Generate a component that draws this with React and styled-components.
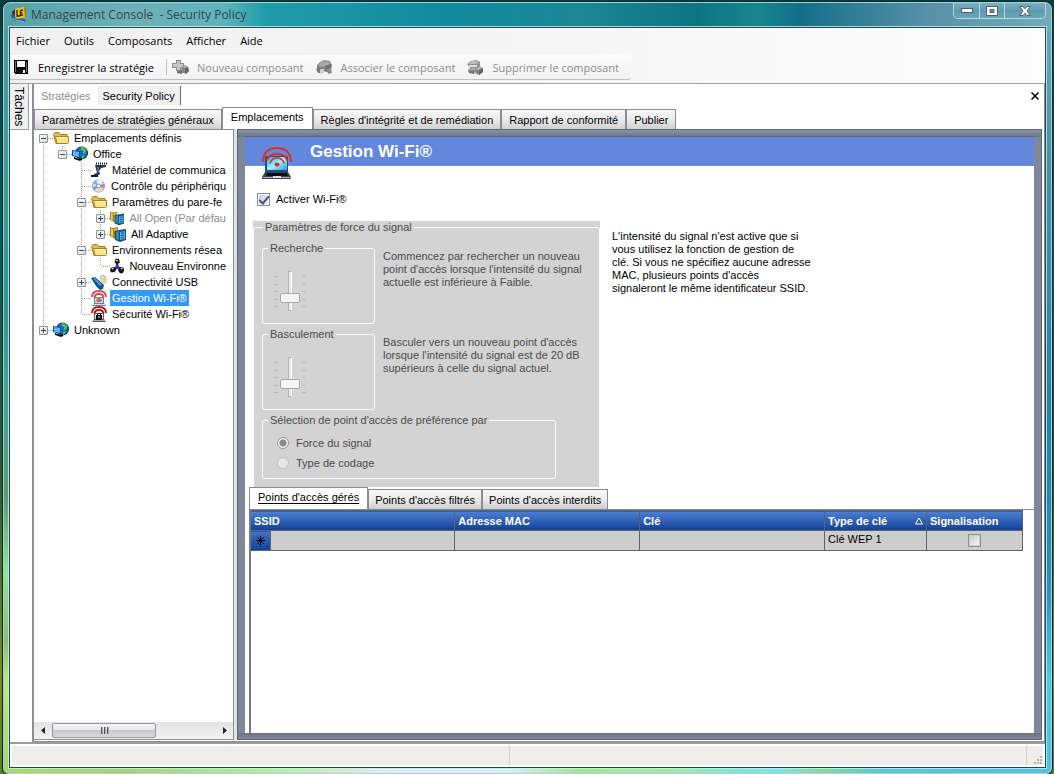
import { useState } from "react";
import styled, { createGlobalStyle, css } from "styled-components";

const GlobalStyle = createGlobalStyle`
  * {
    box-sizing: border-box;
  }
  body {
    margin: 0;
    font-family: "Liberation Sans", Arial, sans-serif;
    font-size: 11px;
    color: #000;
  }
  button,
  input {
    font: inherit;
    color: inherit;
    margin: 0;
  }
  button {
    padding: 0;
    border: none;
    background: none;
    white-space: nowrap;
  }
`;

/* window frame */

const Desktop = styled.div`
  min-height: 100vh;
  display: flex;
  padding: 2px 2px 0 3px;
  background: linear-gradient(180deg, #033f42 0%, #0b5a58 30%, #2e5a34 62%, #7d8a2a 88%, #5f7a28 100%);
`;

const Frame = styled.div`
  flex: 1;
  min-width: 0;
  display: flex;
  flex-direction: column;
  padding: 0 5px 5px 5px;
  border: 1px solid #9fd6d8;
  border-radius: 7px 7px 6px 6px;
  box-shadow: 0 0 0 1px #04282b;
  background:
    linear-gradient(90deg, #55a3a6 0, #6fb0b6 12%, #5eb4bc 21%, #1f9cab 25%, #0f8b9f 42%, #1c8797 55%, #0d7482 66%, #17868f 72%, #126f88 76%, #5790a8 88%, #74abbb 100%) top / 100% 26px no-repeat,
    linear-gradient(90deg, #abd868 0, #a9d373 12%, #b2f19b 26%, #d9e8d0 32%, #deedfc 38%, #dcecf8 48%, #a2e68c 55%, #a8e89a 63%, #7ce6da 70%, #7fe4e4 74%, #8ad99a 78%, #58c6d8 84%, #54bfe4 100%) bottom / 100% 6px no-repeat,
    linear-gradient(180deg, #4a9fa2 0, #2d9794 40%, #3fa795 50%, #5d9a6f 64%, #92e591 74%, #8cbd68 83%, #c0e877 88%, #a5d468 100%) left / 50% 100% no-repeat,
    linear-gradient(180deg, #74abbb 0, #4b8fa8 20%, #2383a8 55%, #2a8fc4 76%, #45cdf2 88%, #4fbde8 100%) right / 50% 100% no-repeat;
`;

const TitleBar = styled.header`
  height: 24px;
  display: flex;
  align-items: flex-start;
`;

const AppTitle = styled.h1`
  flex: 1;
  display: flex;
  align-items: center;
  gap: 4px;
  height: 23px;
  margin: 0;
  padding-left: 2px;
  font: 400 12px "Open Sans", sans-serif;
  color: #33474d;
  white-space: pre;
`;

const Caption = styled.div`
  display: flex;
  border: 1px solid #b4dbe2;
  border-top: none;
  border-radius: 0 0 5px 5px;
  overflow: hidden;
`;

const CaptionButton = styled.button`
  width: ${(p) => (p.$wide ? 41 : 25)}px;
  height: 15px;
  display: flex;
  align-items: center;
  justify-content: center;
  background: linear-gradient(180deg, #7fb0c0, #5e9bb0 50%, #6ba5b5);
  & + & {
    border-left: 1px solid #b4dbe2;
  }
`;

const Client = styled.div`
  flex: 1;
  min-height: 0;
  display: flex;
  flex-direction: column;
  border: 1px solid #1f4b50;
  box-shadow: 0 0 0 1px rgba(200, 240, 240, 0.8);
  background: #fff;
`;

/* menu and toolbar */

const Bars = styled.div`
  background: linear-gradient(90deg, #f0f0f0, #fcfcfc);
  border-bottom: 1px solid #a0a0a0;
  font-family: "Open Sans", sans-serif;
`;

const MenuBar = styled.nav`
  display: flex;
  gap: 14px;
  height: 27px;
  padding: 0 6px;
`;

const MenuItem = styled.button`
  height: 24px;
`;

const Toolbar = styled.div`
  display: inline-flex;
  align-items: center;
  gap: 12px;
  height: 25px;
  margin-bottom: 3px;
  padding: 0 12px 0 4px;
  background: linear-gradient(180deg, #fbfbfb, #f2f2f2);
  border-bottom: 1px solid #c0c0c0;
  border-radius: 0 0 3px 0;
  vertical-align: top;
`;

const ToolButton = styled.button`
  display: flex;
  align-items: center;
  gap: ${(p) => (p.disabled ? 8 : 10)}px;
  &:disabled {
    color: #8d8d8d;
  }
`;

const ToolSeparator = styled.span`
  width: 1px;
  height: 16px;
  margin-right: -7px;
  background: #bdbdbd;
`;

/* main area */

const Main = styled.div`
  flex: 1;
  min-height: 0;
  display: flex;
`;

const TaskStrip = styled.aside`
  width: 22px;
  flex: none;
`;

const TaskTab = styled.button`
  width: 19px;
  height: 46px;
  writing-mode: vertical-rl;
  font-size: 12px;
  border: 1px solid #a0a0a0;
  border-left: none;
  border-top: none;
  background: #f0f0f0;
`;

const Documents = styled.section`
  flex: 1;
  min-width: 0;
  display: flex;
  flex-direction: column;
  border: solid #8b8d99;
  border-width: 0 1px 1px 2px;
  padding: 0 2px 1px 0;
`;

const DocBar = styled.div`
  display: flex;
  align-items: center;
  height: 23px;
  padding: 0 2px 0 0;
`;

const DocTab = styled.button`
  height: 19px;
  padding: 0 7px;
  color: ${(p) => (p.$active ? "#000" : "#8d8d8d")};
  ${(p) =>
    p.$active &&
    css`
      padding: 0 5px;
      background: #f0f0f0;
      border-right: 1px solid #6a6a70;
    `}
`;

const CloseDoc = styled.button`
  margin-left: auto;
  width: 10px;
  height: 10px;
  display: flex;
  align-items: center;
  justify-content: center;
`;

const TabList = styled.div`
  display: flex;
  align-items: flex-end;
  height: 22px;
`;

const Tab = styled.button`
  height: 20px;
  padding: 1px ${(p) => (p.$compact ? 6 : 7)}px 0;
  border: 1px solid #8b8b95;
  border-bottom: none;
  background: linear-gradient(180deg, #f8f8f8, #ebebeb 50%, #cfcfcf);
  ${(p) =>
    p.$active &&
    css`
      height: 22px;
      padding: 0 8px 3px;
      background: #fff;
    `}
  text-decoration: ${(p) => (p.$compact && p.$active ? "underline" : "none")};
  text-underline-offset: 2px;
`;

const Workspace = styled.div`
  flex: 1;
  min-height: 0;
  display: flex;
  gap: 3px;
  background: #e3e3e3;
`;

/* tree */

const TreePanel = styled.div`
  width: 200px;
  flex: none;
  display: flex;
  flex-direction: column;
  background: #fff;
  border: 1px solid #8b8d99;
  border-left: none;
`;

const Tree = styled.ul`
  flex: 1;
  margin: 0;
  padding: 0 5px 0 0;
  list-style: none;
  overflow: hidden;
`;

const TreeRow = styled.li`
  display: flex;
  align-items: center;
  height: 16px;
`;

const dots = "#a4a4a4 0 1px, transparent 1px 2px";

const Guide = styled.span`
  width: 19px;
  height: 16px;
  flex: none;
  display: flex;
  align-items: center;
  justify-content: center;
  background-repeat: no-repeat;
  background-image:
    ${(p) => (p.$up ? `repeating-linear-gradient(180deg, ${dots})` : "none")},
    ${(p) => (p.$down ? `repeating-linear-gradient(180deg, ${dots})` : "none")},
    ${(p) => (p.$right ? `repeating-linear-gradient(90deg, ${dots})` : "none")};
  background-size: 1px 8px, 1px 8px, 9px 1px;
  background-position: 9px 0, 9px 8px, 10px 8px;
`;

const Expander = styled.button`
  width: 9px;
  height: 9px;
  display: flex;
  background: linear-gradient(135deg, #fff, #dcdcdc);
  border: 1px solid #919191;
  border-radius: 1px;
`;

const TreeLabel = styled.span`
  height: 16px;
  line-height: 16px;
  margin-left: 3px;
  padding: 0 2px;
  white-space: nowrap;
  color: ${(p) => (p.$muted ? "#8d8d8d" : "#000")};
  ${(p) =>
    p.$selected &&
    css`
      background: #3399ff;
      color: #fff;
    `}
`;

const ScrollBar = styled.div`
  display: flex;
  height: 17px;
  background: linear-gradient(180deg, #e4e4e4, #f2f2f2);
`;

const ScrollArrow = styled.button`
  width: 17px;
  display: flex;
  align-items: center;
  justify-content: center;
`;

const ScrollTrack = styled.div`
  flex: 1;
  display: flex;
  padding: 1px;
`;

const ScrollThumb = styled.div`
  width: 64%;
  display: flex;
  align-items: center;
  justify-content: center;
  gap: 2px;
  border: 1px solid #979797;
  border-radius: 2px;
  background: linear-gradient(180deg, #f4f4f4 0, #e6e6e8 48%, #c9cacd 50%, #d8d9dc 100%);
`;

const Grip = styled.span`
  width: 1px;
  height: 7px;
  background: #555;
  box-shadow: 1px 0 #aaa;
`;

/* page */

const PageFrame = styled.div`
  flex: 1;
  min-width: 0;
  display: flex;
  border: 1px solid #62656f;
  padding: 6px 7px 6px 7px;
  background:
    linear-gradient(180deg, #8a93a6, #6c7285) top / 100% 7px no-repeat,
    linear-gradient(180deg, #6c7285, #8088a0) bottom / 100% 6px no-repeat,
    #7f879b;
`;

const Page = styled.main`
  flex: 1;
  min-width: 0;
  display: flex;
  flex-direction: column;
  background: #fff;
  border-top: 1px solid #62656f;
`;

const PageHeader = styled.div`
  display: flex;
  height: 29px;
  padding-left: 16px;
  gap: 17px;
  background: #6487de;
  border-bottom: 1px solid #7090d8;
`;

const PageIcon = styled.svg`
  flex: none;
  width: 32px;
  height: 36px;
  margin-top: 8px;
`;

const PageTitle = styled.h2`
  margin: 0;
  font-size: 17px;
  line-height: 30px;
  color: #fff;
`;

const CheckLabel = styled.label`
  display: flex;
  align-items: center;
  align-self: flex-start;
  gap: 6px;
  height: 16px;
  margin: 25px 0 14px 12px;
`;

const CheckBox = styled.input.attrs({ type: "checkbox" })`
  appearance: none;
  display: inline-grid;
  place-content: center;
  width: 13px;
  height: 13px;
  border: 1px solid #8e8f8f;
  background: linear-gradient(135deg, #c9cdd4, #f6f6f6) content-box #f4f4f4;
  padding: 1px;
  &:checked::before {
    content: "";
    width: 4px;
    height: 8px;
    border: solid #3d5191;
    border-width: 0 2px 2px 0;
    transform: rotate(40deg);
  }
`;

const Columns = styled.div`
  display: flex;
  align-items: flex-start;
  padding-left: 8px;
  gap: 12px;
`;

const SignalBox = styled.div`
  width: 347px;
  height: 266px;
  overflow: hidden;
  background: #d3d3d3;
  color: #4c4c4c;
`;

const Group = styled.fieldset`
  min-width: 0;
  margin: 0;
  padding: 0 8px;
  border: 1px solid #fcfdfe;
  border-radius: 3px;
`;

const Legend = styled.legend`
  padding: 0 2px;
  margin-left: ${(p) => (p.$outer ? 1 : -6)}px;
  line-height: 13px;
`;

const OuterGroup = styled(Group)`
  height: 280px;
  display: flex;
  flex-direction: column;
  padding-top: 8px;
`;

const Setting = styled.div`
  display: flex;
  gap: 8px;
  height: 86px;
`;

const SliderGroup = styled(Group)`
  width: 113px;
  height: 82px;
  padding: 16px 11px 0;
`;

const Hint = styled.p`
  width: 204px;
  margin: 0;
  padding-top: 8px;
  line-height: 13px;
`;

const Note = styled.p`
  width: 200px;
  margin: 0;
  padding-top: 9px;
  line-height: 13px;
`;

const SliderRow = styled.div`
  display: flex;
  height: 40px;
`;

const Ticks = styled.div`
  width: 4px;
  display: flex;
  flex-direction: column;
  justify-content: space-between;
  padding: 5px 0 4px;
  & > i {
    height: 1px;
    background: #bcbcbc;
  }
`;

const Slider = styled.input.attrs({ type: "range", min: 0, max: 4 })`
  appearance: none;
  writing-mode: vertical-lr;
  direction: rtl;
  width: 24px;
  height: 40px;
  background: none;
  &::-webkit-slider-runnable-track {
    width: 4px;
    background: #e9ebeb;
    border: 1px solid #b4b4b4;
    border-right-color: #fff;
  }
  &::-webkit-slider-thumb {
    appearance: none;
    width: 20px;
    height: 10px;
    margin-left: -9px;
    background: #f5f5f5;
    border: 1px solid #a6a8aa;
    border-radius: 2px;
  }
`;

const RadioGroup = styled(Group)`
  width: 294px;
  height: 65px;
  display: flex;
  flex-direction: column;
  gap: 4px;
  padding: 8px 11px 0;
`;

const RadioLabel = styled.label`
  display: flex;
  align-items: center;
  gap: 7px;
  height: 16px;
  padding-left: 3px;
`;

const Radio = styled.input.attrs({ type: "radio" })`
  appearance: none;
  width: 12px;
  height: 12px;
  border: 1px solid #c2c2c2;
  border-radius: 50%;
  background: #e6e6e6;
  &:checked {
    border-color: #989898;
    background: radial-gradient(circle, #8a8a8a 0 3px, #eeeeee 4px);
  }
`;

const AccessPoints = styled.section`
  flex: 1;
  display: flex;
  flex-direction: column;
  margin-left: 4px;
`;

const TablePane = styled.div`
  flex: 1;
  padding-right: 11px;
  border-top: 1px solid #85888f;
  border-left: 2px solid #74777f;
`;

const Grid = styled.table`
  width: 100%;
  table-layout: fixed;
  border-collapse: collapse;
`;

const Th = styled.th`
  height: 20px;
  padding: 0 3px;
  border: 1px solid #5f6268;
  border-left-width: ${(p) => (p.$first ? 0 : 1)}px;
  text-align: left;
  line-height: 14px;
  white-space: nowrap;
  color: #fff;
  background: linear-gradient(180deg, #4c80d2, #123f98);
`;

const ThInner = styled.span`
  display: flex;
  align-items: center;
  justify-content: space-between;
`;

const Td = styled.td`
  height: 20px;
  padding: 0 3px;
  border: 1px solid #5f6268;
  background: #cdcdcd;
  line-height: 16px;
  vertical-align: top;
  text-align: ${(p) => (p.$center ? "center" : "left")};
  & > input {
    margin-top: 3px;
    vertical-align: top;
  }
`;

const MarkerCell = styled(Td)`
  padding: 0;
  border-left: none;
  vertical-align: middle;
  background: linear-gradient(180deg, #4273c8, #123f98);
`;

const StatusBar = styled.footer`
  display: flex;
  height: 25px;
  padding: 2px;
  border-top: 2px solid #9b9b9b;
  background: #fff;
`;

const StatusCell = styled.div`
  flex: ${(p) => p.$grow};
  display: flex;
  align-items: flex-end;
  justify-content: flex-end;
  background: #f0edec;
  & + & {
    border-left: 1px solid #cfcccb;
  }
`;

/* icons */

const AppLogo = () => (
  <svg width="16" height="16" viewBox="0 0 16 16">
    <path d="M1 5l3-3v9l-2 1z" fill="#26324f" />
    <path d="M0 8q1 6 7 6l6 1 2-2-2-1-7-1q-3-1-3-4z" fill="#2c57b4" />
    <path d="M2 11q3 3 8 3l3 1" fill="none" stroke="#8fb2ee" />
    <path d="M4 2l9-2 2 10-9 2q-2-1-2-3z" fill="#f0c313" />
    <path d="M13 0l2 1v9l-1 1z" fill="#a97f0a" />
    <path d="M6 3v6h3M12 3L9.500 3.500v5L12 8M9.500 6h2" fill="none" stroke="#2b2710" strokeWidth="1.300" />
  </svg>
);

const SaveIcon = () => (
  <svg width="14" height="14" viewBox="0 0 14 14" shapeRendering="crispEdges">
    <path d="M0 0h14v14H1l-1-1z" fill="#000" />
    <path d="M1 1h1v11H1zM12 2h1v10h-1z" fill="#77773a" />
    <path d="M3 1h8v6H3z" fill="#fff" />
    <path d="M3 9h8v4H3z" fill="#111" />
    <path d="M9 10h2v3H9z" fill="#fff" />
  </svg>
);

const BlocksIcon = ({ kind }) => (
  <svg width="17" height="15" viewBox="0 0 17 15">
    {kind === "new" && (
      <>
        <path d="M5 9l3-2 4 2v3l-3 2-4-1z" fill="#757575" />
        <path d="M5 9l3-2 4 2-3 1z" fill="#a6a6a6" />
        <path d="M10 7l3-2 3 2 1 4-3 3-4-2z" fill="#868686" />
        <path d="M10 7l3-2 3 2-3 1z" fill="#b5b5b5" />
        <path d="M13 8l3-1 1 4-3 3z" fill="#666" />
        <path d="M4 0h5v3h3v5H9v3H4V8H0V3h4z" fill="#8d8d8d" />
        <path d="M5 1h3v3h3v3H8v3H5V7H1V4h4z" fill="#c6c6c6" />
      </>
    )}
    {kind === "link" && (
      <>
        <path d="M1 5l3-3 4-2 6 1 2 4-1 5-4 2-10-2z" fill="#858585" />
        <path d="M2 5l3-3 4-1 5 1 1 2-6 2-4 1z" fill="#a6a6a6" />
        <path d="M9 6l6-2v5l-4 3z" fill="#707070" />
        <path d="M0 9l3-2 3 2v4H2z" fill="#7a7a7a" />
        <path d="M4 9h4v4l-4 1z" fill="#d0d0d0" />
        <path d="M11 9l4-1 1 5-4 1z" fill="#8f8f8f" />
      </>
    )}
    {kind === "delete" && (
      <>
        <path d="M1 10l3-2 4 2-1 4-5-1z" fill="#707070" />
        <path d="M1 10l3-2 4 2-3 1z" fill="#a3a3a3" />
        <path d="M8 9l4-3 4 2v4l-4 3-4-2z" fill="#858585" />
        <path d="M8 9l4-3 4 2-4 2z" fill="#b5b5b5" />
        <path d="M12 10l4-2v4l-4 3z" fill="#666" />
        <path d="M0 4l4-3 5-1 4 2v4L9 9 3 8z" fill="#8f8f8f" />
        <path d="M1 4l4-3 4 0 3 2-4 1z" fill="#bcbcbc" />
        <path d="M2 5h8v2H2z" fill="#dedede" />
      </>
    )}
  </svg>
);

const FolderIcon = () => (
  <svg width="16" height="16" viewBox="0 0 16 16">
    <path d="M.5 4.500l1.500-2h4l1.500 2h6.500v9H3z" fill="#e3bd45" stroke="#a67b15" />
    <path d="M2.500 6.500h13v6l-1 1H4z" fill="#fbe48d" stroke="#ad821d" />
    <path d="M3.500 7.500h11" stroke="#fff8d0" />
  </svg>
);

const GlobeIcon = () => (
  <svg width="16" height="16" viewBox="0 0 16 16">
    <circle cx="9.500" cy="7" r="6.500" fill="#0b2447" />
    <circle cx="9.500" cy="6.500" r="5.500" fill="#1c63cf" />
    <path d="M9 1c3 0 5 2 5.500 4l-2 3-2-1 1-2-3-1zM10 10l3-1-1 3-2 1z" fill="#47c552" />
    <path d="M0 4l8 1v7l-8-2z" fill="#174b9d" />
    <path d="M1 5l6 1v5L1 9.500z" fill="#5bbaf5" />
    <path d="M2 11l6 2 2-1v2l-2 1-6-2z" fill="#111" />
  </svg>
);

const HardwareIcon = () => (
  <svg width="16" height="16" viewBox="0 0 16 16">
    <path d="M4 3l11 0v2l-5 1-2 3 1 3-3 2H2l1-2 3-1-1-4z" fill="#293552" />
    <path d="M5 1.500h11" stroke="#111" strokeWidth="2" strokeDasharray="1 1" />
    <path d="M0 13h7v2H0z" fill="#161c2c" />
    <path d="M7 5v5" stroke="#8a97b8" />
  </svg>
);

const DiscIcon = () => (
  <svg width="16" height="16" viewBox="0 0 16 16">
    <circle cx="8" cy="8" r="6.500" fill="#d9dfec" stroke="#a7a3b8" />
    <path d="M8 8L2 5l3-3z" fill="#58b9ee" />
    <path d="M8 8V1l4 1z" fill="#fff" />
    <path d="M8 8l6-3v6z" fill="#c17fe6" />
    <path d="M8 8l4 5-4 2z" fill="#efe26b" />
    <path d="M8 8l-5 5-1-4z" fill="#7a8fe4" />
    <circle cx="8" cy="8" r="2" fill="#fff" stroke="#889" />
  </svg>
);

const FirewallIcon = () => (
  <svg width="16" height="16" viewBox="0 0 16 16">
    <path d="M0 1l3 1 5-1v3l-3 1v8l-5-3z" fill="#b07c0c" />
    <path d="M1 2l2 1v8l-2-1zM4 3l3-1v1L4 5z" fill="#f3cd4f" />
    <path d="M5 5l4-1 7-1v11l-6 2-5-2z" fill="#12507e" />
    <path d="M6 6l3-1v9l-3-1z" fill="#2f86bf" />
    <path d="M10 6l5-1v8l-5 1z" fill="#4faee2" />
    <path d="M11 7h3M11 9.500h3M11 12h3" stroke="#12507e" />
  </svg>
);

const NetworkIcon = () => (
  <svg width="16" height="16" viewBox="0 0 16 16">
    <path d="M8 4v5M8 9l-4 3M8 9l4 3" stroke="#1d35d8" strokeWidth="3" />
    <path d="M6 0h4l1 4-3 2-3-2z" fill="#111" />
    <path d="M1 10l4-1 2 3-2 3H1l-1-2z" fill="#111" />
    <path d="M11 9l4 1 1 3-2 3h-3l-2-3z" fill="#111" />
    <path d="M6 1h3v2H7zM2 10h2v2H2zM12 10h2v2h-2z" fill="#f0b070" />
  </svg>
);

const UsbIcon = () => (
  <svg width="16" height="16" viewBox="0 0 16 16">
    <path d="M0 4l4-1 9 8-1 4-3 1-4-4z" fill="#14518f" />
    <path d="M2 4l2 0 7 7-2 1z" fill="#49a3de" />
    <path d="M10 5V3q2-3 4 0v2" fill="none" stroke="#b9b9a5" strokeWidth="1.500" />
    <path d="M9 4h7v5l-3 1-4-3z" fill="#e6d3a0" />
  </svg>
);

const WifiIcon = ({ locked }) => (
  <svg width="16" height="16" viewBox="0 0 16 16">
    <path d="M3 7h10v6l2 3H1l2-3z" fill={locked ? "#555b60" : "#5d86a0"} />
    <path d="M4 8h8v5H4z" fill={locked ? "#e3e3e3" : "#a8e0f5"} />
    <path d="M2 14.500h12" stroke={locked ? "#aaa" : "#d5dde2"} />
    <path d="M1 7q0-6 7-6t7 6M3.500 8q0-4 4.500-4t4.500 4" fill="none" stroke={locked ? "#c4141b" : "#e0474a"} strokeWidth="1.800" />
    {locked ? (
      <>
        <path d="M5 9h6v5H5z" fill="#111" />
        <path d="M6.500 9V8q1.500-2 3 0v1" fill="none" stroke="#111" />
        <path d="M8 10v2" stroke="#fff" />
      </>
    ) : (
      <path d="M5 10q3-4 6 0l-1 2H6z" fill="#e0664a" />
    )}
  </svg>
);

const icons = {
  folder: <FolderIcon />,
  globe: <GlobeIcon />,
  hardware: <HardwareIcon />,
  disc: <DiscIcon />,
  firewall: <FirewallIcon />,
  network: <NetworkIcon />,
  usb: <UsbIcon />,
  wifi: <WifiIcon />,
  wifiLock: <WifiIcon locked />,
};

const WifiLaptop = () => (
  <PageIcon viewBox="0 0 32 36" aria-hidden="true">
    <defs>
      <linearGradient id="screen" x1="0" y1="0" x2="1" y2="1">
        <stop offset="0" stopColor="#2ea4ee" />
        <stop offset="0.500" stopColor="#a0f0ff" />
        <stop offset="1" stopColor="#2b9be6" />
      </linearGradient>
    </defs>
    <path d="M4 12l2-1h20l1 1v15H4z" fill="#1b4f86" />
    <path d="M6 12h20v13H6z" fill="url(#screen)" />
    <path d="M4 27h23l3 5v2H1v-2z" fill="#3b4450" />
    <path d="M6 28h20l1 3H5z" fill="#0c0f14" />
    <path d="M2 32h28v1H2z" fill="#a9b4bf" />
    <path d="M12 31h8v2h-8z" fill="#d5dce2" />
    <g fill="none" stroke="#d8321e" strokeLinecap="round">
      <path d="M2 16Q3 3 16 3t14 13" strokeWidth="2" />
      <path d="M6 15q2-6 10-6t10 6" strokeWidth="2" />
      <path d="M9 18q2-5 7-5t7 5" strokeWidth="1.500" />
    </g>
    <ellipse cx="16" cy="19.500" rx="2.500" ry="2" fill="#d8321e" />
  </PageIcon>
);

/* data */

const menus = ["Fichier", "Outils", "Composants", "Afficher", "Aide"];

const mainTabs = [
  "Paramètres de stratégies généraux",
  "Emplacements",
  "Règles d'intégrité et de remédiation",
  "Rapport de conformité",
  "Publier",
];

const accessTabs = ["Points d'accès gérés", "Points d'accès filtrés", "Points d'accès interdits"];

// guides: one letter per column - "I" line, "T" branch, "L" last branch, "F" first, "_" empty
const treeItems = [
  { label: "Emplacements définis", icon: "folder", guides: "F", sign: "-" },
  { label: "Office", icon: "globe", guides: "IL", sign: "-" },
  { label: "Matériel de communica", icon: "hardware", guides: "I_T" },
  { label: "Contrôle du périphériqu", icon: "disc", guides: "I_T" },
  { label: "Paramètres du pare-fe", icon: "folder", guides: "I_T", sign: "-" },
  { label: "All Open (Par défau", icon: "firewall", guides: "I_IT", sign: "+", muted: true },
  { label: "All Adaptive", icon: "firewall", guides: "I_IL", sign: "+" },
  { label: "Environnements résea", icon: "folder", guides: "I_T", sign: "-" },
  { label: "Nouveau Environne", icon: "network", guides: "I_IL" },
  { label: "Connectivité USB", icon: "usb", guides: "I_T", sign: "+" },
  { label: "Gestion Wi-Fi®", icon: "wifi", guides: "I_T", selected: true },
  { label: "Sécurité Wi-Fi®", icon: "wifiLock", guides: "I_L" },
  { label: "Unknown", icon: "globe", guides: "L", sign: "+" },
];

const Tabs = ({ items, active, onSelect, compact }) => (
  <TabList role="tablist">
    {items.map((item, i) => (
      <Tab
        key={item}
        role="tab"
        aria-selected={i === active}
        $active={i === active}
        $compact={compact}
        onClick={() => onSelect(i)}
      >
        {item}
      </Tab>
    ))}
  </TabList>
);

const TreeItem = ({ item }) => (
  <TreeRow role="treeitem" aria-selected={!!item.selected}>
    {item.guides.split("").map((g, i) => (
      <Guide key={i} $up={"ITL".includes(g)} $down={"ITF".includes(g)} $right={"TLF".includes(g)}>
        {item.sign && i === item.guides.length - 1 && (
          <Expander aria-label={item.label}>
            <svg width="7" height="7" viewBox="0 0 7 7" shapeRendering="crispEdges">
              <path d={item.sign === "+" ? "M1 3h5v1H1zM3 1h1v5H3z" : "M1 3h5v1H1z"} fill="#2b4a8b" />
            </svg>
          </Expander>
        )}
      </Guide>
    ))}
    {icons[item.icon]}
    <TreeLabel $muted={item.muted} $selected={item.selected}>
      {item.label}
    </TreeLabel>
  </TreeRow>
);

const LevelSlider = ({ label }) => (
  <SliderGroup disabled>
    <Legend>{label}</Legend>
    <SliderRow>
      <Ticks>
        <i /><i /><i /><i /><i />
      </Ticks>
      <Slider aria-label={label} defaultValue={1} />
      <Ticks>
        <i /><i /><i /><i /><i />
      </Ticks>
    </SliderRow>
  </SliderGroup>
);

const App = () => {
  const [mainTab, setMainTab] = useState(1);
  const [accessTab, setAccessTab] = useState(0);
  const [enabled, setEnabled] = useState(true);

  return (
    <Desktop>
      <GlobalStyle />
      <Frame>
        <TitleBar>
          <AppTitle>
            <AppLogo />
            {"Management Console  - Security Policy"}
          </AppTitle>
          <Caption>
            <CaptionButton aria-label="Réduire">
              <svg width="12" height="5" viewBox="0 0 12 5">
                <rect x="0.500" y="0.500" width="11" height="4" fill="#fff" stroke="#4f5f74" />
              </svg>
            </CaptionButton>
            <CaptionButton aria-label="Agrandir">
              <svg width="12" height="10" viewBox="0 0 12 10">
                <path d="M.5.5h11v9H.5zM4 3.500h4v3H4z" fill="#fff" fillRule="evenodd" stroke="#4f5f74" />
              </svg>
            </CaptionButton>
            <CaptionButton $wide aria-label="Fermer">
              <svg width="12" height="10" viewBox="0 0 12 10">
                <path d="M.7.500h3.300l2 2.300L8 .500h3.300L8 5l3.300 4.500H8L6 7.200 4 9.500H.7L4 5z" fill="#fff" stroke="#4f5f74" />
              </svg>
            </CaptionButton>
          </Caption>
        </TitleBar>

        <Client>
          <Bars>
            <MenuBar>
              {menus.map((m) => (
                <MenuItem key={m}>{m}</MenuItem>
              ))}
            </MenuBar>
            <Toolbar>
              <ToolButton>
                <SaveIcon />
                Enregistrer la stratégie
              </ToolButton>
              <ToolSeparator />
              <ToolButton disabled>
                <BlocksIcon kind="new" />
                Nouveau composant
              </ToolButton>
              <ToolButton disabled>
                <BlocksIcon kind="link" />
                Associer le composant
              </ToolButton>
              <ToolButton disabled>
                <BlocksIcon kind="delete" />
                Supprimer le composant
              </ToolButton>
            </Toolbar>
          </Bars>

          <Main>
            <TaskStrip>
              <TaskTab>Tâches</TaskTab>
            </TaskStrip>
            <Documents>
              <DocBar>
                <DocTab>Stratégies</DocTab>
                <DocTab $active>Security Policy</DocTab>
                <CloseDoc aria-label="Fermer le document">
                  <svg width="8" height="8" viewBox="0 0 8 8">
                    <path d="M.5.500l7 7M7.500.500l-7 7" stroke="#000" strokeWidth="1.500" />
                  </svg>
                </CloseDoc>
              </DocBar>
              <Tabs items={mainTabs} active={mainTab} onSelect={setMainTab} />
              <Workspace>
                <TreePanel>
                  <Tree role="tree">
                    {treeItems.map((item) => (
                      <TreeItem key={item.label} item={item} />
                    ))}
                  </Tree>
                  <ScrollBar>
                    <ScrollArrow aria-label="Défiler à gauche">
                      <svg width="4" height="7" viewBox="0 0 4 7">
                        <path d="M4 0v7L0 3.500z" fill="#222" />
                      </svg>
                    </ScrollArrow>
                    <ScrollTrack>
                      <ScrollThumb>
                        <Grip />
                        <Grip />
                        <Grip />
                      </ScrollThumb>
                    </ScrollTrack>
                    <ScrollArrow aria-label="Défiler à droite">
                      <svg width="4" height="7" viewBox="0 0 4 7">
                        <path d="M0 0v7l4-3.500z" fill="#222" />
                      </svg>
                    </ScrollArrow>
                  </ScrollBar>
                </TreePanel>

                <PageFrame>
                  <Page>
                    <PageHeader>
                      <WifiLaptop />
                      <PageTitle>Gestion Wi-Fi®</PageTitle>
                    </PageHeader>
                    <CheckLabel>
                      <CheckBox checked={enabled} onChange={(e) => setEnabled(e.target.checked)} />
                      Activer Wi-Fi®
                    </CheckLabel>
                    <Columns>
                      <SignalBox>
                        <OuterGroup>
                          <Legend $outer>Paramètres de force du signal</Legend>
                          <Setting>
                            <LevelSlider label="Recherche" />
                            <Hint>
                              Commencez par rechercher un nouveau point d'accès lorsque l'intensité du signal
                              actuelle est inférieure à Faible.
                            </Hint>
                          </Setting>
                          <Setting>
                            <LevelSlider label="Basculement" />
                            <Hint>
                              Basculer vers un nouveau point d'accès lorsque l'intensité du signal est de 20 dB
                              supérieurs à celle du signal actuel.
                            </Hint>
                          </Setting>
                          <RadioGroup disabled>
                            <Legend>Sélection de point d'accès de préférence par</Legend>
                            <RadioLabel>
                              <Radio name="preference" defaultChecked />
                              Force du signal
                            </RadioLabel>
                            <RadioLabel>
                              <Radio name="preference" />
                              Type de codage
                            </RadioLabel>
                          </RadioGroup>
                        </OuterGroup>
                      </SignalBox>
                      <Note>
                        L'intensité du signal n'est active que si vous utilisez la fonction de gestion de clé. Si
                        vous ne spécifiez aucune adresse MAC, plusieurs points d'accès signaleront le même
                        identificateur SSID.
                      </Note>
                    </Columns>

                    <AccessPoints>
                      <Tabs items={accessTabs} active={accessTab} onSelect={setAccessTab} compact />
                      <TablePane>
                        <Grid>
                          <colgroup>
                            <col style={{ width: 19 }} />
                            <col />
                            <col />
                            <col />
                            <col style={{ width: 102 }} />
                            <col style={{ width: 96 }} />
                          </colgroup>
                          <thead>
                            <tr>
                              <Th colSpan={2} $first>SSID</Th>
                              <Th>Adresse MAC</Th>
                              <Th>Clé</Th>
                              <Th>
                                <ThInner>
                                  Type de clé
                                  <svg width="8" height="8" viewBox="0 0 8 8">
                                    <path d="M4 1L7.500 7h-7z" fill="none" stroke="#fff" />
                                  </svg>
                                </ThInner>
                              </Th>
                              <Th>Signalisation</Th>
                            </tr>
                          </thead>
                          <tbody>
                            <tr>
                              <MarkerCell $center>
                                <svg width="9" height="9" viewBox="0 0 9 9">
                                  <path d="M4.500 0v9M0 4.500h9M1 1l7 7M8 1L1 8" stroke="#000" />
                                </svg>
                              </MarkerCell>
                              <Td />
                              <Td />
                              <Td />
                              <Td>Clé WEP 1</Td>
                              <Td $center>
                                <CheckBox aria-label="Signalisation" />
                              </Td>
                            </tr>
                          </tbody>
                        </Grid>
                      </TablePane>
                    </AccessPoints>
                  </Page>
                </PageFrame>
              </Workspace>
            </Documents>
          </Main>

          <StatusBar>
            <StatusCell $grow={499} />
            <StatusCell $grow={519} />
            <StatusCell $grow={16}>
              <svg width="10" height="10" viewBox="0 0 10 10">
                <path d="M7 1h2v2H7zM4 4h2v2H4zM7 4h2v2H7zM1 7h2v2H1zM4 7h2v2H4zM7 7h2v2H7z" fill="#b5b2b1" />
              </svg>
            </StatusCell>
          </StatusBar>
        </Client>
      </Frame>
    </Desktop>
  );
};

export default App;
